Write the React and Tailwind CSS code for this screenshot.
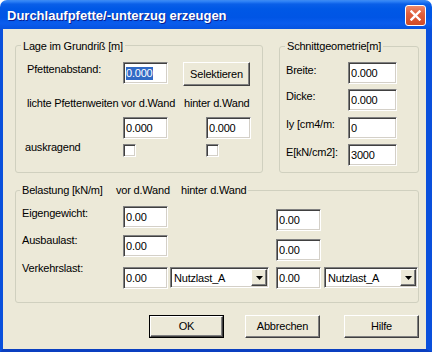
import React from "react";

const sunken =
  "bg-white border border-t-[#808080] border-l-[#808080] border-r-white border-b-white shadow-[inset_1px_1px_0_#404040,inset_-1px_-1px_0_#d4d0c8]";
const raised =
  "bg-[#ece9d8] border border-t-white border-l-white border-r-[#404040] border-b-[#404040] shadow-[inset_-1px_-1px_0_#808080]";

function Input({ className = "", value }) {
  return (
    <div className={`${sunken} h-[22px] flex items-center pl-[2px] pt-[1px] shrink-0 ${className}`}>
      {value}
    </div>
  );
}

function Check({ className = "" }) {
  return <div className={`${sunken} w-[13px] h-[13px] shrink-0 ${className}`} />;
}

function Select({ className = "", value }) {
  return (
    <div className={`${sunken} h-[21px] flex items-stretch p-[1px] shrink-0 ${className}`}>
      <div className="flex-1 flex items-center pl-[2px] pt-[1px]">{value}</div>
      <div className={`${raised} w-[16px] flex items-center justify-center`}>
        <svg width="7" height="4" viewBox="0 0 7 4">
          <path d="M0 0H7L3.5 4Z" fill="#000" />
        </svg>
      </div>
    </div>
  );
}

function Button({ className = "", children }) {
  return (
    <div className={`${raised} flex items-center justify-center shrink-0 ${className}`}>
      {children}
    </div>
  );
}

export default function App() {
  return (
    <div className="w-[432px] h-[352px] bg-white flex flex-col font-['Liberation_Sans',Arial,sans-serif] text-[11px] leading-[13px] tracking-[-0.2px] text-black overflow-hidden">
      {/* Title bar */}
      <div className="h-[29px] shrink-0 rounded-t-[7px] flex items-start pl-[7px] pr-[6px] bg-[linear-gradient(180deg,#3f8cf3_0%,#2a7ef5_6%,#0a5fe8_14%,#0058e6_30%,#0055e5_60%,#0a5ced_80%,#0653e0_100%)]">
        <span className="mt-[8px] text-white font-bold text-[13px] leading-[16px] tracking-normal [text-shadow:1px_1px_0_#0a1f8f]">
          Durchlaufpfette/-unterzug erzeugen
        </span>
        <div className="ml-auto mt-[5px] w-[21px] h-[21px] rounded-[3px] border border-white bg-[linear-gradient(180deg,#ec8a6c_0%,#e0603e_40%,#d04a26_100%)] flex items-center justify-center">
          <svg width="11" height="11" viewBox="0 0 11 11">
            <path d="M1.5 1.5L9.5 9.5M9.5 1.5L1.5 9.5" stroke="#fff" strokeWidth="2.4" strokeLinecap="square" />
          </svg>
        </div>
      </div>

      {/* Body */}
      <div className="flex-1 bg-[#ece9d8] border-l-[3px] border-r-[6px] border-b-[3px] border-l-[#0a50dc] border-r-[#0a50dc] border-b-[#0a3fc0] flex flex-col pl-[12px] pt-[16px]">
        <div className="flex items-start">
          {/* Group 1 */}
          <div className="relative w-[248px] h-[128px] border border-[#d0d0bf] rounded-[3px] shrink-0">
            <span className="absolute left-[5px] top-[-6px] px-[2px] bg-[#ece9d8] whitespace-nowrap">
              Lage im Grundriß [m]
            </span>
            <div className="flex items-start mt-[16px] pl-[11px]">
              <span className="w-[96px] mt-[1px] shrink-0">Pfettenabstand:</span>
              <div className={`${sunken} h-[22px] w-[45px] flex items-center pl-[2px] pt-[1px] shrink-0`}>
                <span className="bg-[#316ac5] text-white">0.000</span>
              </div>
              <Button className="ml-[15px] w-[67px] h-[24px]">Selektieren</Button>
            </div>
            <div className="flex mt-[11px] pl-[11px] whitespace-nowrap">
              <span className="w-[157px] shrink-0">lichte Pfettenweiten vor d.Wand</span>
              <span>hinter d.Wand</span>
            </div>
            <div className="flex mt-[7px] pl-[107px]">
              <Input className="w-[45px]" value="0.000" />
              <Input className="w-[45px] ml-[38px]" value="0.000" />
            </div>
            <div className="flex items-start mt-[5px] pl-[9px]">
              <span className="w-[98px] -mt-[3px] shrink-0">auskragend</span>
              <Check />
              <Check className="ml-[70px]" />
            </div>
          </div>

          {/* Group 2 */}
          <div className="relative ml-[16px] mt-[1px] w-[140px] h-[127px] border border-[#d0d0bf] rounded-[3px] shrink-0">
            <span className="absolute left-[5px] top-[-7px] px-[2px] bg-[#ece9d8] whitespace-nowrap">
              Schnittgeometrie[m]
            </span>
            <div className="flex items-start mt-[15px] pl-[6px]">
              <span className="w-[62px] mt-[2px] shrink-0">Breite:</span>
              <Input className="w-[49px]" value="0.000" />
            </div>
            <div className="flex items-start mt-[5px] pl-[6px]">
              <span className="w-[62px] mt-[1px] shrink-0">Dicke:</span>
              <Input className="w-[49px]" value="0.000" />
            </div>
            <div className="flex items-start mt-[6px] pl-[6px]">
              <span className="w-[62px] mt-[1px] shrink-0">Iy [cm4/m:</span>
              <Input className="w-[49px]" value="0" />
            </div>
            <div className="flex items-start mt-[5px] pl-[6px]">
              <span className="w-[62px] mt-[2px] shrink-0 whitespace-nowrap">E[kN/cm2]:</span>
              <Input className="w-[49px]" value="3000" />
            </div>
          </div>
        </div>

        {/* Group 3 */}
        <div className="relative mt-[17px] w-[404px] h-[113px] border border-[#d0d0bf] rounded-[3px] shrink-0">
          <span className="absolute left-[4px] top-[-7px] px-[2px] bg-[#ece9d8] whitespace-nowrap flex">
            <span className="w-[94px] shrink-0">Belastung [kN/m]</span>
            <span className="w-[65px] shrink-0">vor d.Wand</span>
            <span className="shrink-0">hinter d.Wand</span>
          </span>
          <div className="flex items-start mt-[15px] pl-[6px]">
            <span className="w-[101px] mt-[1px] shrink-0">Eigengewicht:</span>
            <Input className="w-[45px]" value="0.00" />
            <Input className="w-[45px] ml-[108px] mt-[3px]" value="0.00" />
          </div>
          <div className="flex items-start mt-[4px] pl-[6px]">
            <span className="w-[101px] -mt-[1px] shrink-0">Ausbaulast:</span>
            <Input className="w-[45px]" value="0.00" />
            <Input className="w-[45px] ml-[108px] mt-[4px]" value="0.00" />
          </div>
          <div className="flex items-start mt-[6px] pl-[6px]">
            <span className="w-[101px] -mt-[5px] shrink-0">Verkehrslast:</span>
            <Input className="w-[45px]" value="0.00" />
            <Select className="w-[99px] ml-[2px]" value="Nutzlast_A" />
            <Input className="w-[45px] ml-[7px]" value="0.00" />
            <Select className="w-[94px] ml-[3px]" value="Nutzlast_A" />
          </div>
        </div>

        {/* Buttons */}
        <div className="flex mt-[12px] pl-[134px]">
          <div className="w-[75px] h-[23px] border border-black flex shrink-0">
            <Button className="flex-1">OK</Button>
          </div>
          <Button className="ml-[21px] w-[75px] h-[23px]">Abbrechen</Button>
          <Button className="ml-[24px] w-[75px] h-[23px]">Hilfe</Button>
        </div>
      </div>
    </div>
  );
}
